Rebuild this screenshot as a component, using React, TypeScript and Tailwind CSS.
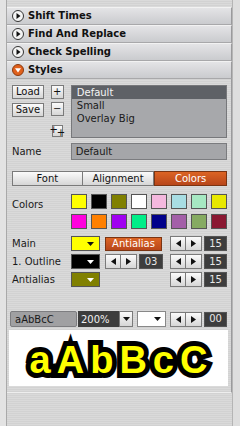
import React from 'react';

const stripes =
  'bg-[repeating-linear-gradient(to_bottom,#dadada_0px,#dadada_1px,#d2d2d2_1px,#d2d2d2_2px)]';

function Arrow({ open }: { open?: boolean }) {
  return (
    <svg width="12" height="12" viewBox="0 0 12 12" className="shrink-0">
      <circle cx="6" cy="6" r="5.5" fill={open ? '#e0601c' : '#f4f4f4'} stroke={open ? '#8a3a10' : '#333'} />
      {open ? (
        <path d="M3 4.2 L9 4.2 L6 8.4 Z" fill="#fff" />
      ) : (
        <path d="M4.5 3 L8.5 6 L4.5 9 Z" fill="#111" />
      )}
    </svg>
  );
}

function Header({ title, open }: { title: string; open?: boolean }) {
  return (
    <div className="h-[18px] flex items-center gap-[4px] pl-[5px] border-t border-t-[#f2f2f2] border-b border-b-[#a8a8aa] border-r border-r-[#9a9a9c] bg-linear-to-b from-[#e4e4e6] to-[#cacbce]">
      <Arrow open={open} />
      <span className="font-bold text-[10px] text-[#111] leading-none font-['DejaVu_Sans',sans-serif]">{title}</span>
    </div>
  );
}

function Btn({ children, className = '' }: { children?: React.ReactNode; className?: string }) {
  return (
    <div
      className={`flex items-center justify-center border border-[#7a7a7a] bg-linear-to-b from-[#fbfbfb] to-[#d6d6d6] text-[10px] text-[#111] leading-none ${className}`}
    >
      {children}
    </div>
  );
}

function Arrows() {
  return (
    <div className="flex">
      <Btn className="w-[16px] h-[15px]">
        <svg width="5" height="7" viewBox="0 0 5 7"><path d="M5 0 L0 3.5 L5 7 Z" fill="#111" /></svg>
      </Btn>
      <Btn className="w-[16px] h-[15px] border-l-0">
        <svg width="5" height="7" viewBox="0 0 5 7"><path d="M0 0 L5 3.5 L0 7 Z" fill="#111" /></svg>
      </Btn>
    </div>
  );
}

function NumBox({ v, w = 'w-[23px]' }: { v: string; w?: string }) {
  return (
    <div className={`${w} h-[15px] flex items-center justify-center bg-[#3d3d3d] border border-[#555] text-[10px] text-[#e8e8e8] leading-none`}>
      {v}
    </div>
  );
}

function ColorDrop({ color, tri }: { color: string; tri: string }) {
  return (
    <div className="w-[29px] h-[15px] flex items-center justify-end pr-[5px] border border-[#555]" style={{ background: color }}>
      <svg width="7" height="4" viewBox="0 0 7 4"><path d="M0 0 L7 0 L3.5 4 Z" fill={tri} /></svg>
    </div>
  );
}

const row1 = ['#ffff00', '#000000', '#808000', '#ffffff', '#f4b8de', '#a8dde3', '#a6e8c2', '#e8e800'];
const row2 = ['#ff00dd', '#ff8000', '#a000f0', '#00ee88', '#00008a', '#a35fa8', '#86ab62', '#8a1832'];

export default function App() {
  return (
    <div className={`w-[240px] h-[426px] flex overflow-hidden font-['DejaVu_Sans',sans-serif] ${stripes}`}>
      <div className="w-[7px] shrink-0 bg-[#e3e3e3] border-r border-[#a9a9a9]" />
      <div className="w-[225px] shrink-0 flex flex-col pt-[7px]">
        <Header title="Shift Times" />
        <Header title="Find And Replace" />
        <Header title="Check Spelling" />
        <Header title="Styles" open />

        <div className="flex flex-col pl-[5px] pr-[4px] pt-[6px] pb-[6px] border-b border-b-[#eeeeee] border-r border-r-[#9a9a9c] text-[10px] text-[#1a1a1a]">
          <div className="flex h-[53px]">
            <div className="w-[32px] flex flex-col gap-[4px]">
              <Btn className="h-[14px]">Load</Btn>
              <Btn className="h-[14px]">Save</Btn>
            </div>
            <div className="w-[13px] ml-[7px] flex flex-col">
              <Btn className="h-[14px]">+</Btn>
              <Btn className="h-[14px] mt-[3px]">−</Btn>
              <Btn className="h-[12px] w-[11px] ml-[1px] mt-[9px] text-[9px]">
                <span className="relative -top-[1px]">+</span>
                <span className="relative top-[2px] -ml-[1px]">+</span>
              </Btn>
            </div>
            <div className="w-[157px] ml-[7px] h-[53px] bg-[#a7a8ab] border border-[#77787b] flex flex-col">
              <div className="h-[13px] bg-[#5e6166] text-[#f4f4f4] pl-[5px] flex items-center">Default</div>
              <div className="h-[13px] pl-[5px] flex items-center">Small</div>
              <div className="h-[13px] pl-[5px] flex items-center">Overlay Big</div>
            </div>
          </div>

          <div className="flex items-center h-[17px] mt-[5px]">
            <span className="w-[59px]">Name</span>
            <div className="w-[157px] h-[17px] bg-[#a5a6a9] border border-[#7b7c7f] pl-[4px] flex items-center">Default</div>
          </div>

          <div className="flex h-[15px] mt-[11px]">
            <Btn className="w-[71px] h-[15px]">Font</Btn>
            <Btn className="w-[72px] h-[15px] border-l-0">Alignment</Btn>
            <div className="w-[73px] h-[15px] flex items-center justify-center border border-[#7a3412] bg-linear-to-b from-[#dc6424] to-[#b8461a] text-white leading-none">
              Colors
            </div>
          </div>

          <div className="flex mt-[8px]">
            <span className="w-[59px] pt-[3px]">Colors</span>
            <div className="flex flex-col gap-[5px]">
              {[row1, row2].map((r, i) => (
                <div key={i} className="flex gap-[4px]">
                  {r.map((c, j) => (
                    <div key={j} className="w-[16px] h-[15px] border border-[#555]" style={{ background: c }} />
                  ))}
                </div>
              ))}
            </div>
          </div>

          <div className="flex items-center h-[15px] mt-[7px]">
            <span className="w-[59px]">Main</span>
            <ColorDrop color="#ffff00" tri="#111" />
            <div className="w-[57px] h-[14px] ml-[5px] flex items-center justify-center border border-[#7a3412] bg-linear-to-b from-[#dc6424] to-[#b8461a] text-white leading-none">
              Antialias
            </div>
            <div className="ml-auto flex gap-[2px]">
              <Arrows />
              <NumBox v="15" />
            </div>
          </div>

          <div className="flex items-center h-[15px] mt-[3px]">
            <span className="w-[59px]">1. Outline</span>
            <ColorDrop color="#000000" tri="#fff" />
            <div className="ml-[5px] flex gap-[2px]">
              <Arrows />
              <NumBox v="03" w="w-[24px]" />
            </div>
            <div className="ml-auto flex gap-[2px]">
              <Arrows />
              <NumBox v="15" />
            </div>
          </div>

          <div className="flex items-center h-[15px] mt-[3px]">
            <span className="w-[59px]">Antialias</span>
            <ColorDrop color="#808000" tri="#fff" />
            <div className="ml-auto flex gap-[2px]">
              <Arrows />
              <NumBox v="15" />
            </div>
          </div>

          <div className="flex items-center h-[16px] mt-[24px] -ml-[2px]">
            <div className="w-[67px] h-[16px] rounded-[2px] bg-[#a0a0a2] border border-[#7d7d80] pl-[4px] flex items-center">aAbBcC</div>
            <div className="w-[41px] h-[16px] ml-[1px] bg-[#3d3d3d] text-[#f0f0f0] pl-[3px] flex items-center">200%</div>
            <Btn className="w-[14px] h-[16px]">
              <svg width="7" height="4" viewBox="0 0 7 4"><path d="M0 0 L7 0 L3.5 4 Z" fill="#111" /></svg>
            </Btn>
            <div className="w-[29px] h-[16px] ml-[4px] bg-white border border-[#888] flex items-center justify-end pr-[4px]">
              <svg width="7" height="4" viewBox="0 0 7 4"><path d="M0 0 L7 0 L3.5 4 Z" fill="#111" /></svg>
            </div>
            <div className="ml-auto flex gap-[2px]">
              <Arrows />
              <NumBox v="00" />
            </div>
          </div>

          <div className="h-[56px] mt-[3px] -ml-[3px] -mr-[1px] bg-white flex items-center justify-center">
            <span className="font-['Liberation_Sans',sans-serif] font-bold text-[38px] leading-none tracking-[6px] text-[#ffff00] [-webkit-text-stroke:10px_#000] [paint-order:stroke_fill] pl-[6px] pt-[4px]">
              aAbBcC
            </span>
          </div>
        </div>
      </div>
      <div className="w-[8px] shrink-0 bg-[#dedede] border-l border-[#b5b5b5]" />
    </div>
  );
}
